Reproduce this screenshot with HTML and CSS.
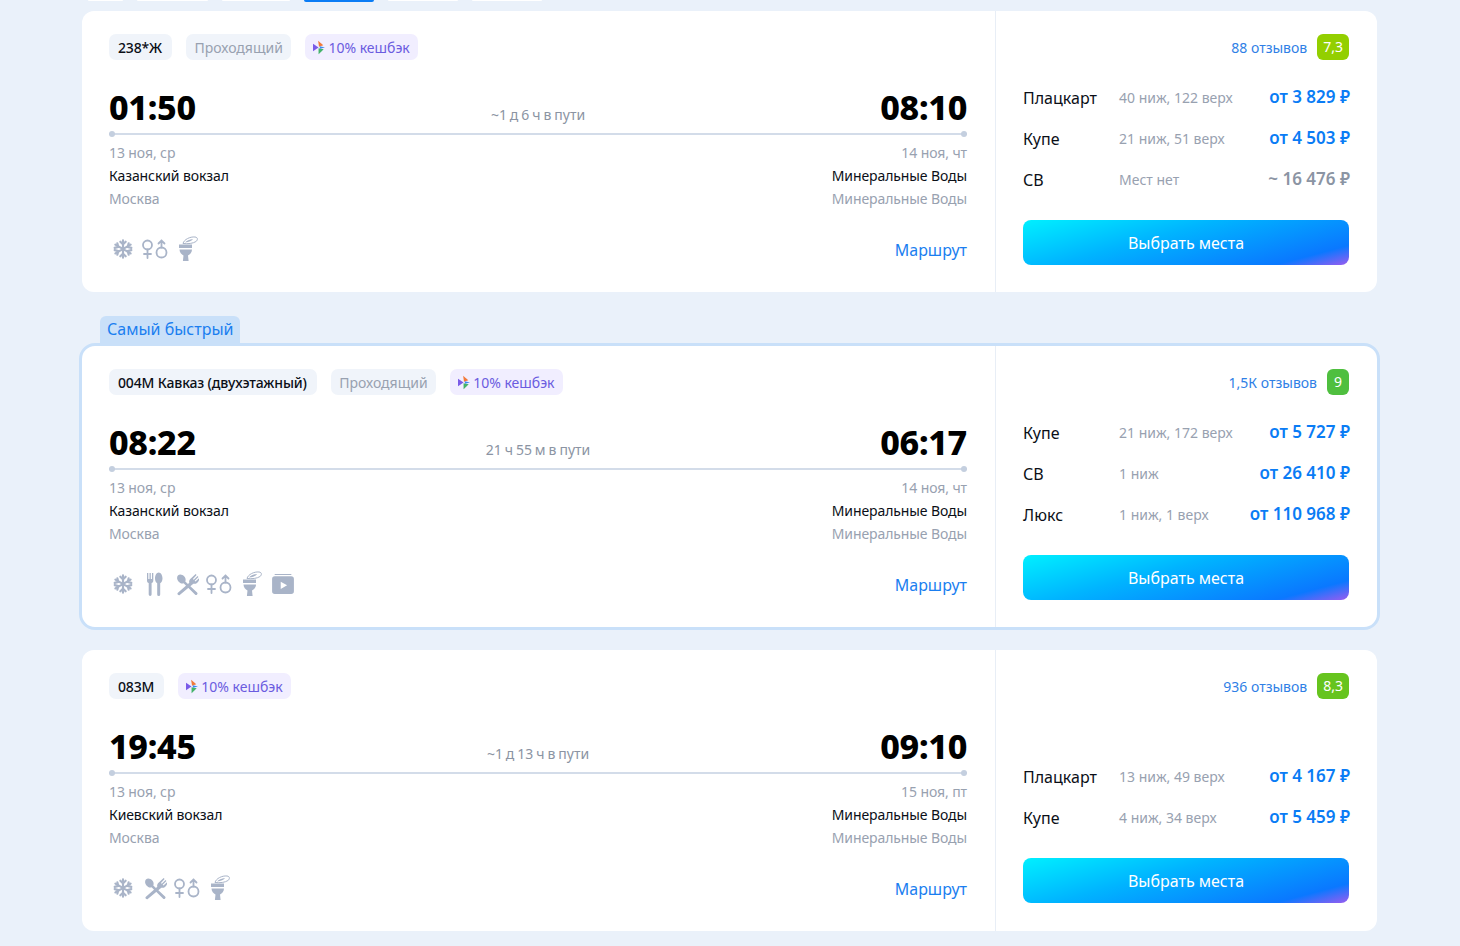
FILE: index.html
```html
<!DOCTYPE html>
<html lang="ru">
<head>
    <meta charset="UTF-8">
    <title>Поезда Москва - Минеральные Воды</title>
    <link rel="stylesheet" href="styles.css">
</head>
<body>

<svg class="sprite" width="0" height="0">
    <symbol id="i-snow" viewBox="0 0 24 24">
        <g fill="none" stroke="currentColor" stroke-width="2.600" stroke-linecap="round">
            <path d="M12 1.500v21M2.900 6.750l18.200 10.500M21.100 6.750L2.900 17.250"/>
            <path d="M8.800 3.200l3.200 3.200 3.200-3.200M8.800 20.800l3.200-3.200 3.200 3.200M2 10.700l4.400-1.200-1.200-4.400M22 10.700l-4.400-1.200 1.200-4.400M2 13.300l4.400 1.200-1.200 4.400M22 13.300l-4.400 1.200 1.200 4.400"/>
        </g>
    </symbol>
    <symbol id="i-wc" viewBox="0 0 26 20">
        <g fill="none" stroke="currentColor" stroke-width="1.800" stroke-linecap="round">
            <circle cx="5.500" cy="6" r="4.500"/>
            <path d="M5.500 10.500V19M2 15h7"/>
            <circle cx="19.500" cy="13.500" r="5"/>
            <path d="M19.500 8.500V1.500M16.500 4.500l3-3 3 3"/>
        </g>
    </symbol>
    <symbol id="i-toilet" viewBox="0 0 20 26">
        <path fill="currentColor" d="M0 8.500h13v3.500H0z"/>
        <path fill="currentColor" d="M.5 13.500h12.500c0 3-2 5-4 6l.6 5.500H3.900l.6-5.500c-2-1-4-3-4-6z"/>
        <path fill="none" stroke="currentColor" stroke-width="1" d="M4 7.500C5 3.500 11 .5 16 1c3 .3 3 3 1 4.500-3 2-8 2.500-13 2z"/>
        <path fill="currentColor" d="M6 6.500c1.500-1.800 4.500-3.300 8-3.500-1 1.800-4 3.300-8 3.500z"/>
    </symbol>
    <symbol id="i-cutlery" viewBox="0 0 16 24">
        <path fill="currentColor" d="M0 1h1.300v6h1.200V1h1.300v6H5V1h1.300v7.500c0 1.300-.7 2.200-1.700 2.600v11.400a1.450 1.450 0 0 1-2.900 0V11.100C.7 10.700 0 9.800 0 8.500z"/>
        <path fill="currentColor" d="M11.700.5c2.200 0 3.800 2.800 3.800 5.800 0 2.400-1 4.300-2.300 4.900v11.300a1.500 1.500 0 0 1-3 0V11.200C8.900 10.600 8 8.700 8 6.300c0-3 1.500-5.800 3.700-5.800z"/>
    </symbol>
    <symbol id="i-cross" viewBox="0 0 24 24">
        <path fill="currentColor" d="M2 2.500c1.800-1.800 4.800-1 6.500 1 1.500 1.700 2 3.800 1.200 5.300L22 20.300a1.500 1.500 0 0 1-2.200 2.200L7.900 10.700C6 11.300 4 10.500 2.600 8.800 1 7 .6 4 2 2.500z"/>
        <path fill="currentColor" d="M20.500 1l1 1-3.800 4.300.8.800 4-3.900.9.900-3.900 4 .8.800 4-3.700c.3 2-.8 4-2.400 5.200-1.200.9-2.700 1.200-3.800.7L4.200 22.700a1.500 1.500 0 0 1-2.200-2.100l11.900-10.300c-.5-1.100-.2-2.500.7-3.700z"/>
    </symbol>
    <symbol id="i-video" viewBox="0 0 24 22">
        <path fill="currentColor" d="M4 0h16c.8 0 1.400.5 1.500 1.200h-19C2.600.5 3.200 0 4 0z"/>
        <path fill="currentColor" fill-rule="evenodd" d="M3 2.500h18a3 3 0 0 1 3 3V19a3 3 0 0 1-3 3H3a3 3 0 0 1-3-3V5.500a3 3 0 0 1 3-3zM9.500 8.500v8l7-4z"/>
    </symbol>
    <symbol id="i-cash" viewBox="0 0 14 16">
        <path fill="#f2793a" d="M6 0l6 5.500-5 1.500z"/>
        <path fill="#7a5be8" d="M0 3.500l6.500 4.500L0 12.500z"/>
        <path fill="#45b36b" d="M6.500 8.800l6 1.200-6 6z"/>
        <path fill="#3d8bf0" d="M8 6.500l6 1.500-6 1.500z"/>
    </symbol>
</svg>

<div class="tabs">
    <span class="tab tab-1"></span>
    <span class="tab tab-2"></span>
    <span class="tab tab-3"></span>
    <span class="tab tab-4 active"></span>
    <span class="tab tab-4"></span>
    <span class="tab tab-4"></span>
</div>

<div class="list">

    <!-- 238Ж -->
    <div class="card">
        <div class="card-main">
            <div class="tags">
                <span class="tag tag-num">238*Ж</span>
                <span class="tag tag-gray">Проходящий</span>
                <span class="tag tag-cash"><svg class="cash-icon"><use href="#i-cash"/></svg>10% кешбэк</span>
            </div>
            <div class="times">
                <span class="time">01:50</span>
                <span class="duration">~1 д 6 ч в пути</span>
                <span class="time">08:10</span>
            </div>
            <div class="line"></div>
            <div class="stations">
                <div>
                    <div class="date">13 ноя, ср</div>
                    <div class="station">Казанский вокзал</div>
                    <div class="city">Москва</div>
                </div>
                <div class="to">
                    <div class="date">14 ноя, чт</div>
                    <div class="station">Минеральные Воды</div>
                    <div class="city">Минеральные Воды</div>
                </div>
            </div>
            <div class="card-foot">
                <div class="icons">
                    <svg class="ic-snow"><use href="#i-snow"/></svg>
                    <svg class="ic-wc"><use href="#i-wc"/></svg>
                    <svg class="ic-toilet"><use href="#i-toilet"/></svg>
                </div>
                <a class="route">Маршрут</a>
            </div>
        </div>
        <div class="card-side">
            <div class="reviews">
                <a>88 отзывов</a>
                <span class="score score-lime">7,3</span>
            </div>
            <div class="offers">
                <div class="offer"><span class="cls">Плацкарт</span><span class="seats">40 ниж, 122 верх</span><span class="price">от 3 829 ₽</span></div>
                <div class="offer"><span class="cls">Купе</span><span class="seats">21 ниж, 51 верх</span><span class="price">от 4 503 ₽</span></div>
                <div class="offer"><span class="cls">СВ</span><span class="seats">Мест нет</span><span class="price price-none">~ 16 476 ₽</span></div>
                <button class="pick">Выбрать места</button>
            </div>
        </div>
    </div>

    <!-- самый быстрый -->
    <div class="fast-label">Самый быстрый</div>
    <div class="card card-fast">
        <div class="card-main">
            <div class="tags">
                <span class="tag tag-num">004М Кавказ (двухэтажный)</span>
                <span class="tag tag-gray">Проходящий</span>
                <span class="tag tag-cash"><svg class="cash-icon"><use href="#i-cash"/></svg>10% кешбэк</span>
            </div>
            <div class="times">
                <span class="time">08:22</span>
                <span class="duration">21 ч 55 м в пути</span>
                <span class="time">06:17</span>
            </div>
            <div class="line"></div>
            <div class="stations">
                <div>
                    <div class="date">13 ноя, ср</div>
                    <div class="station">Казанский вокзал</div>
                    <div class="city">Москва</div>
                </div>
                <div class="to">
                    <div class="date">14 ноя, чт</div>
                    <div class="station">Минеральные Воды</div>
                    <div class="city">Минеральные Воды</div>
                </div>
            </div>
            <div class="card-foot">
                <div class="icons">
                    <svg class="ic-snow"><use href="#i-snow"/></svg>
                    <svg class="ic-cutlery"><use href="#i-cutlery"/></svg>
                    <svg class="ic-cross"><use href="#i-cross"/></svg>
                    <svg class="ic-wc"><use href="#i-wc"/></svg>
                    <svg class="ic-toilet"><use href="#i-toilet"/></svg>
                    <svg class="ic-video"><use href="#i-video"/></svg>
                </div>
                <a class="route">Маршрут</a>
            </div>
        </div>
        <div class="card-side">
            <div class="reviews">
                <a>1,5К отзывов</a>
                <span class="score score-green">9</span>
            </div>
            <div class="offers">
                <div class="offer"><span class="cls">Купе</span><span class="seats">21 ниж, 172 верх</span><span class="price">от 5 727 ₽</span></div>
                <div class="offer"><span class="cls">СВ</span><span class="seats">1 ниж</span><span class="price">от 26 410 ₽</span></div>
                <div class="offer"><span class="cls">Люкс</span><span class="seats">1 ниж, 1 верх</span><span class="price">от 110 968 ₽</span></div>
                <button class="pick">Выбрать места</button>
            </div>
        </div>
    </div>

    <!-- 083М -->
    <div class="card card-last">
        <div class="card-main">
            <div class="tags">
                <span class="tag tag-num">083М</span>
                <span class="tag tag-cash"><svg class="cash-icon"><use href="#i-cash"/></svg>10% кешбэк</span>
            </div>
            <div class="times">
                <span class="time">19:45</span>
                <span class="duration">~1 д 13 ч в пути</span>
                <span class="time">09:10</span>
            </div>
            <div class="line"></div>
            <div class="stations">
                <div>
                    <div class="date">13 ноя, ср</div>
                    <div class="station">Киевский вокзал</div>
                    <div class="city">Москва</div>
                </div>
                <div class="to">
                    <div class="date">15 ноя, пт</div>
                    <div class="station">Минеральные Воды</div>
                    <div class="city">Минеральные Воды</div>
                </div>
            </div>
            <div class="card-foot">
                <div class="icons">
                    <svg class="ic-snow"><use href="#i-snow"/></svg>
                    <svg class="ic-cross"><use href="#i-cross"/></svg>
                    <svg class="ic-wc"><use href="#i-wc"/></svg>
                    <svg class="ic-toilet"><use href="#i-toilet"/></svg>
                </div>
                <a class="route">Маршрут</a>
            </div>
        </div>
        <div class="card-side">
            <div class="reviews">
                <a>936 отзывов</a>
                <span class="score score-green2">8,3</span>
            </div>
            <div class="offers">
                <div class="offer"><span class="cls">Плацкарт</span><span class="seats">13 ниж, 49 верх</span><span class="price">от 4 167 ₽</span></div>
                <div class="offer"><span class="cls">Купе</span><span class="seats">4 ниж, 34 верх</span><span class="price">от 5 459 ₽</span></div>
                <button class="pick">Выбрать места</button>
            </div>
        </div>
    </div>

</div>

</body>
</html>
```

FILE: styles.css
```css
html, body {
    height: 100%;
}

body {
    margin: 0;
    height: 946px;
    overflow: hidden;
    background-color: #eaf1fa;
    font-family: "Noto Sans", Arial, sans-serif;
    color: #0b0f17;
}

.sprite {
    position: absolute;
}

.tabs {
    display: flex;
    height: 2px;
    padding-left: 88px;
    gap: 14px;
    overflow: hidden;
}

.tab {
    height: 1px;
    background-color: #fff;
    border-radius: 0 0 4px 4px;
}

.tab-1 { width: 35px; }
.tab-2 { width: 71px; }
.tab-3 { width: 68px; }
.tab-4 { width: 70px; }

.tab.active {
    height: 2px;
    background-color: #0a7cf5;
}

.list {
    display: flex;
    flex-direction: column;
    align-items: flex-start;
    padding: 9px 0 0 82px;
}

.card {
    display: flex;
    width: 1295px;
    height: 281px;
    background-color: #fff;
    border-radius: 12px;
}

.card-fast {
    margin-left: -3px;
    border: 3px solid #c9e0f9;
    border-radius: 16px;
}

.card-last {
    margin-top: 20px;
}

.fast-label {
    margin: 24px 0 0 18px;
    height: 27px;
    padding: 0 6.500px 0 7px;
    line-height: 26px;
    font-size: 16px;
    color: #1a7ef0;
    background-color: #c9e0f9;
    border-radius: 6px 6px 0 0;
}

.card-main {
    width: 914px;
    box-sizing: border-box;
    padding: 23px 28px 0 27px;
    display: flex;
    flex-direction: column;
    border-right: 1px solid #e8eef6;
}

.tags {
    display: flex;
    gap: 14px;
    height: 26px;
}

.tag {
    display: flex;
    align-items: center;
    padding: 0 9px;
    font-size: 14px;
    border-radius: 7px;
}

.tag-num {
    padding-right: 10px;
    background-color: #f0f4fa;
    font-weight: 500;
    letter-spacing: -0.15px;
}

.tag-gray {
    padding: 0 8.500px;
    background-color: #f0f4fa;
    color: #98a1b0;
}

.tag-cash {
    padding: 0 8px;
    background-color: #f1eeff;
    color: #6b5ce0;
}

.cash-icon {
    width: 12px;
    height: 15px;
    margin-right: 3px;
}

.times {
    display: flex;
    justify-content: space-between;
    align-items: center;
    height: 44px;
    margin-top: 25px;
}

.time {
    font-size: 34px;
    font-weight: 800;
    letter-spacing: -0.3px;
    color: #000;
}

.duration {
    font-size: 14px;
    word-spacing: -0.7px;
    color: #8b94a3;
    padding-top: 14px;
}

.line {
    position: relative;
    height: 2px;
    margin-top: 4px;
    background-color: #d3dce9;
}

.line::before,
.line::after {
    content: '';
    position: absolute;
    top: -2px;
    width: 6px;
    height: 6px;
    border-radius: 50%;
    background-color: #c4cfdf;
}

.line::before { left: 0; }
.line::after { right: 0; }

.stations {
    display: flex;
    justify-content: space-between;
    margin-top: 6px;
    font-size: 14px;
    line-height: 23px;
    letter-spacing: -0.1px;
}

.to {
    text-align: right;
}

.date, .city {
    color: #98a1b0;
}

.card-foot {
    display: flex;
    justify-content: space-between;
    align-items: center;
    margin-top: 26px;
}

.icons {
    display: grid;
    grid-auto-flow: column;
    grid-auto-columns: 32px;
    justify-items: center;
    align-items: center;
    margin: 0 0 2px -2px;
    color: #a9b4c8;
}

.ic-snow { width: 20px; height: 20px; }
.ic-wc { width: 26px; height: 20px; }
.ic-toilet { width: 20px; height: 26px; margin-left: 3px; }
.ic-cutlery { width: 16px; height: 24px; }
.ic-cross { width: 23px; height: 23px; }
.ic-video { width: 22px; height: 20px; }

.route {
    font-size: 16px;
    color: #1a7ef0;
}

.card-side {
    flex: 1;
    box-sizing: border-box;
    padding: 23px 28px 27px 27px;
    display: flex;
    flex-direction: column;
    justify-content: space-between;
}

.card-last .card-side {
    padding-bottom: 28px;
}

.reviews {
    display: flex;
    justify-content: flex-end;
    align-items: center;
    gap: 10px;
    height: 26px;
    font-size: 14px;
    color: #2f7fe6;
}

.score {
    min-width: 10px;
    height: 26px;
    padding: 0 6px;
    line-height: 26px;
    text-align: center;
    color: #fff;
    border-radius: 6px;
}

.score-lime { background-color: #93cf00; }
.score-green { background-color: #4fbf3f; }
.score-green2 { background-color: #66c41e; }

.offers {
    display: flex;
    flex-direction: column;
}

.offer {
    display: flex;
    align-items: center;
    height: 41px;
}

.cls {
    width: 96px;
    font-size: 16px;
}

.seats {
    font-size: 14px;
    color: #98a1b0;
}

.price {
    margin: -2px -1px 0 auto;
    font-size: 17px;
    font-weight: 600;
    color: #0a7cf5;
}

.price-none {
    color: #8b94a3;
}

.pick {
    height: 45px;
    margin-top: 20px;
    border: none;
    border-radius: 8px;
    font-family: inherit;
    font-size: 16px;
    color: #fff;
    background: linear-gradient(165deg, #00f0ff 0%, #00b4ff 40%, #0a78ff 85%, #9b5cf0 100%);
}
```
